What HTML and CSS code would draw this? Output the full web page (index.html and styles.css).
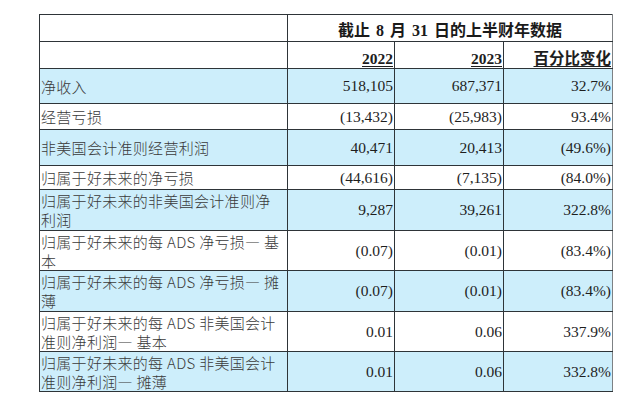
FILE: index.html
```html
<!DOCTYPE html>
<html lang="zh-CN">
<head>
<meta charset="utf-8">
<title>上半财年数据</title>
<link rel="stylesheet" href="styles.css">
</head>
<body>
<table class="fin">
  <colgroup>
    <col class="c-label">
    <col class="c-num">
    <col class="c-num2">
    <col class="c-pct">
  </colgroup>
  <tr class="h27">
    <td class="blank"></td>
    <td class="title" colspan="3">截止 8 月 31 日的上半财年数据</td>
  </tr>
  <tr class="h27">
    <td class="blank"></td>
    <td class="yr"><span>2022</span></td>
    <td class="yr"><span>2023</span></td>
    <td class="yr"><span>百分比变化</span></td>
  </tr>
  <tr class="h35 blue">
    <td class="label">净收入</td>
    <td class="num">518,105</td>
    <td class="num">687,371</td>
    <td class="num">32.7%</td>
  </tr>
  <tr class="h26">
    <td class="label">经营亏损</td>
    <td class="num">(13,432)</td>
    <td class="num">(25,983)</td>
    <td class="num">93.4%</td>
  </tr>
  <tr class="h36 blue">
    <td class="label">非美国会计准则经营利润</td>
    <td class="num">40,471</td>
    <td class="num">20,413</td>
    <td class="num">(49.6%)</td>
  </tr>
  <tr class="h24">
    <td class="label">归属于好未来的净亏损</td>
    <td class="num">(44,616)</td>
    <td class="num">(7,135)</td>
    <td class="num">(84.0%)</td>
  </tr>
  <tr class="h41 blue">
    <td class="label">归属于好未来的非美国会计准则净<br>利润</td>
    <td class="num">9,287</td>
    <td class="num">39,261</td>
    <td class="num">322.8%</td>
  </tr>
  <tr class="h40">
    <td class="label">归属于好未来的每 ADS 净亏损— 基<br>本</td>
    <td class="num">(0.07)</td>
    <td class="num">(0.01)</td>
    <td class="num">(83.4%)</td>
  </tr>
  <tr class="h41 blue">
    <td class="label">归属于好未来的每 ADS 净亏损— 摊<br>薄</td>
    <td class="num">(0.07)</td>
    <td class="num">(0.01)</td>
    <td class="num">(83.4%)</td>
  </tr>
  <tr class="h40">
    <td class="label">归属于好未来的每 ADS 非美国会计<br>准则净利润— 基本</td>
    <td class="num">0.01</td>
    <td class="num">0.06</td>
    <td class="num">337.9%</td>
  </tr>
  <tr class="h40 blue">
    <td class="label">归属于好未来的每 ADS 非美国会计<br>准则净利润— 摊薄</td>
    <td class="num">0.01</td>
    <td class="num">0.06</td>
    <td class="num">332.8%</td>
  </tr>
</table>
</body>
</html>
```

FILE: styles.css
```css
html, body {
  margin: 0;
  padding: 0;
  background: #ffffff;
}

body {
  padding: 14px 0 0 39px;
}

.fin {
  border-collapse: collapse;
  table-layout: fixed;
  width: 573px;
  font-family: "Liberation Serif", "Noto Sans CJK SC", serif;
  color: #1e1e1e;
}

.c-label { width: 248px; }
.c-num { width: 107px; }
.c-num2 { width: 109px; }
.c-pct { width: 109px; }

.fin td {
  border: 1px solid #2e3438;
  padding: 0 1px;
  overflow: hidden;
}

.fin tr td:last-child {
  border-right-color: #7d8184;
}

.h27 { height: 27px; }
.h35 { height: 35px; }
.h26 { height: 26px; }
.h36 { height: 36px; }
.h24 { height: 24px; }
.h41 { height: 41px; }
.h40 { height: 40px; }

.blue td {
  background: #cdeefb;
}

.title {
  font-family: "Liberation Serif", "Noto Sans CJK SC", serif;
  font-weight: bold;
  font-size: 16px;
  text-align: center;
  vertical-align: bottom;
  padding: 0 26px 3px 0;
  word-spacing: 2px;
  color: #1a1a1a;
}

.yr {
  text-align: right;
  vertical-align: bottom;
  font-weight: bold;
  font-size: 15.5px;
  padding-bottom: 4px;
}

.yr span {
  text-decoration: underline;
  text-underline-offset: 2px;
}

.label {
  font-family: "Noto Sans CJK SC", "Noto Sans", sans-serif;
  font-weight: 300;
  font-size: 15px;
  line-height: 19px;
  color: #3a3a3a;
  white-space: nowrap;
  vertical-align: middle;
  letter-spacing: 0.3px;
}

.num {
  text-align: right;
  vertical-align: middle;
  font-size: 15.5px;
  white-space: nowrap;
}
```
